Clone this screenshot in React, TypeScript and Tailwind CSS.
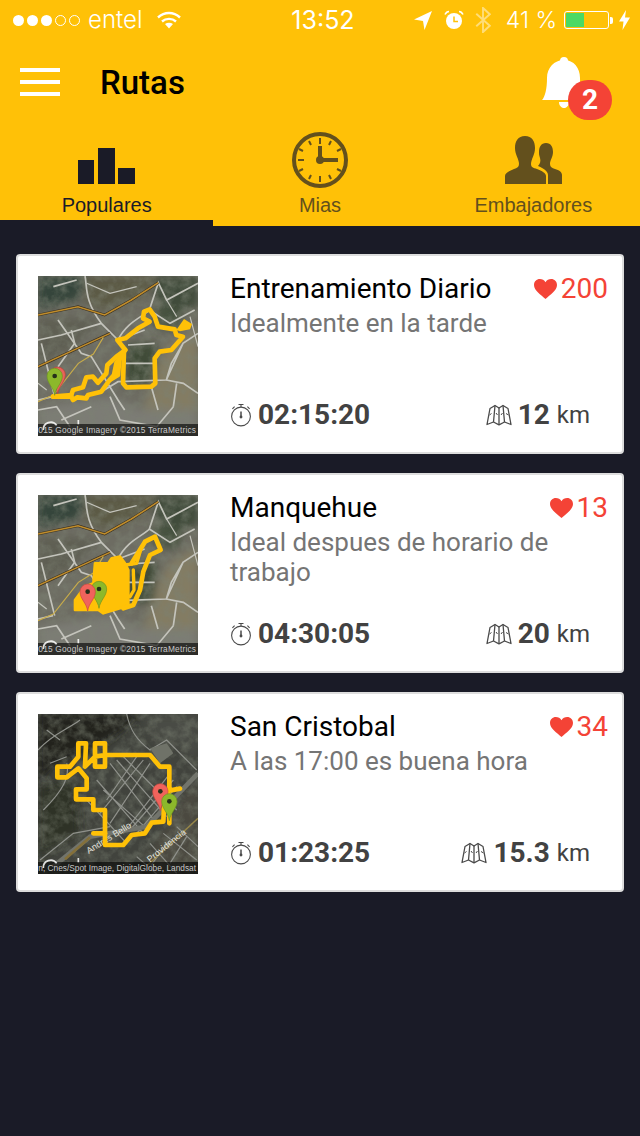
import type { ReactNode } from 'react';

const Pin = ({ x, y, color, edge }: { x: number; y: number; color: string; edge: string }) => (
  <g>
    <path
      d={`M${x} ${y}C${x - 3} ${y - 24} ${x - 23} ${y - 36} ${x - 23} ${y - 58}A23 23 0 1 1 ${x + 23} ${y - 58}C${x + 23} ${y - 36} ${x + 3} ${y - 24} ${x} ${y}Z`}
      fill={color}
      stroke={edge}
      strokeWidth="2"
    />
    <circle cx={x} cy={y - 58} r="7" fill="#26301a" />
  </g>
);

const RouteLine = ({ points, width = 14 }: { points: string; width?: number }) => (
  <polyline points={points} fill="none" stroke="#ffc107" strokeWidth={width} strokeLinejoin="round" strokeLinecap="round" />
);

const AndesTerrain = () => (
  <>
    <rect x="84" y="78" width="480" height="480" fill="#6d6c62" />
    <g filter="url(#soft-lg)">
      <polygon points="84,78 230,78 205,150 84,180" fill="#36443a" />
      <polygon points="230,78 440,78 400,140 290,180 230,165" fill="#5c5a45" />
      <polygon points="440,78 564,78 564,170 470,185 430,130" fill="#3f4c3a" />
      <polygon points="480,280 564,230 564,480 400,480 440,350" fill="#837b63" />
      <polygon points="350,285 440,280 430,400 345,400" fill="#414b38" />
      <polygon points="430,170 520,180 500,240 430,230" fill="#47533f" />
      <polygon points="84,470 300,440 400,480 564,480 564,558 84,558" fill="#7c7b75" />
      <polygon points="84,200 270,210 180,300 84,340" fill="#5f5f53" />
    </g>
    <rect x="84" y="78" width="480" height="480" filter="url(#grain)" opacity="0.55" />
    <g fill="none" stroke="#c4c4bc" strokeWidth="5" filter="url(#soft-sm)">
      <path d="M225 78C232 110 222 150 274 220L324 270M84 270L154 255L274 220M144 210L214 310L244 320L324 450L344 480" />
      <path d="M324 270C350 215 400 200 418 180L445 98L470 150L564 100M418 180L480 220L554 180M130 110L200 90M94 280L114 360L134 440M184 240L194 280L144 350" />
      <path d="M274 425L324 395L469 390L519 280L564 250M519 280L484 340L469 390M346 340L434 340M434 280L354 285M324 270L404 240M424 410L444 480" />
      <path d="M84 450L129 440M244 470L154 510M84 480L140 470L180 530M300 440L330 510L440 530L490 470M469 390L520 400L564 430M490 470L500 400" />
      <path d="M230 100L300 130L380 110M470 150L500 200M540 200L564 290M84 400L110 420" strokeWidth="3.5" />
    </g>
    <path d="M84 195L204 170L284 195L364 150L445 98" fill="none" stroke="#3a3020" strokeWidth="8" />
    <path d="M84 195L204 170L284 195L364 150L445 98" fill="none" stroke="#c08d2c" strokeWidth="4.5" />
    <path d="M84 350L300 250" fill="none" stroke="#3a3020" strokeWidth="8" />
    <path d="M84 350L300 250" fill="none" stroke="#c08d2c" strokeWidth="4.5" />
    <path d="M84 455L130 435L205 340L250 312L280 262" fill="none" stroke="#c8ac4a" strokeWidth="3.5" />
  </>
);

const UrbanTerrain = () => (
  <>
    <rect x="84" y="42" width="480" height="480" fill="#41433d" />
    <g filter="url(#soft-lg)">
      <polygon points="84,42 400,42 300,120 130,200 84,260" fill="#20241b" />
      <polygon points="84,260 200,230 210,400 84,470" fill="#2d3128" />
      <polygon points="400,42 564,42 564,170 430,120" fill="#4a4c45" />
      <polygon points="540,260 564,250 564,522 380,522" fill="#4c4a40" />
    </g>
    <rect x="84" y="42" width="480" height="480" filter="url(#grain)" opacity="0.5" />
    <g fill="none" stroke="#8f918b" strokeWidth="3.5" filter="url(#soft-sm)">
      <path d="M300 190L440 370M340 170L500 330M260 240L400 400M230 300L350 430M300 370L420 190M340 400L480 220M290 300L380 170M380 400L500 260M320 180L470 350M280 270L410 385M270 340L400 180M360 390L490 240" />
      <path d="M350 42C360 90 380 120 420 150L470 120L560 210M84 150C130 100 170 90 210 60M100 330C160 270 180 230 170 190M90 480L190 400L300 380M110 90L150 120M120 190L170 170" />
      <path d="M420 430L500 520M460 400L560 480M380 470L440 522M500 380L564 440M480 420L420 500M530 410L480 490" />
    </g>
    <path d="M130 500L240 410L410 380L564 220" fill="none" stroke="#72746c" strokeWidth="14" />
    <path d="M165 478L240 412" fill="none" stroke="#84703a" strokeWidth="8" />
    <path d="M410 498L564 355" fill="none" stroke="#978649" strokeWidth="4.5" />
    <path d="M420 145L470 130L490 160L450 190Z" fill="#6f7268" />
    <text x="236" y="462" transform="rotate(-32 236 462)" fontSize="27" fill="#e4e4df">Andres Bello</text>
    <text x="420" y="488" transform="rotate(-39 420 488)" fontSize="27" fill="#e4e4df">Providencia</text>
  </>
);

const RouteMap = ({ y, credit, children }: { y: number; credit: string; children: ReactNode }) => (
  <svg viewBox={`84 ${y} 480 480`} className="h-40 w-40 shrink-0 font-['Liberation_Sans']">
    <defs>
      <filter id="soft-lg" x="-20%" y="-20%" width="140%" height="140%">
        <feGaussianBlur stdDeviation="12" />
      </filter>
      <filter id="soft-sm">
        <feGaussianBlur stdDeviation="1.2" />
      </filter>
      <filter id="grain" x="0" y="0" width="100%" height="100%">
        <feTurbulence type="fractalNoise" baseFrequency="0.035" numOctaves="4" seed="7" />
        <feColorMatrix values="0 0 0 0 0.2 0 0 0 0 0.22 0 0 0 0 0.17 2.2 0 0 0 -0.8" />
      </filter>
    </defs>
    {children}
    <rect x="84" y={y + 444} width="480" height="36" fill="#000" opacity="0.62" />
    <path d={`M100 ${y + 462}A22 22 0 0 1 140 ${y + 448}M205 ${y + 432}V${y + 445}`} fill="none" stroke="#fff" strokeWidth="5" opacity="0.85" />
    <text x="85" y={y + 471} fontSize="25" fill="#c9c9c9" textLength="473">
      {credit}
    </text>
  </svg>
);

const StopwatchIcon = () => (
  <svg viewBox="0 0 22 24" className="h-6 w-[22px] shrink-0" fill="none" stroke="#4a4a4a" strokeWidth="1.1">
    <circle cx="11" cy="13.5" r="9.4" />
    <path d="M11 8.5V14" strokeWidth="1.5" />
    <circle cx="11" cy="14" r="0.9" fill="#4a4a4a" />
    <path d="M8.5 1.5H13.5M11 1.5V4M2.4 5.8L4.6 3.6M19.6 5.8L17.4 3.6" />
  </svg>
);

const FoldedMapIcon = () => (
  <svg viewBox="0 0 26 22" className="h-[22px] w-[26px] shrink-0" fill="none" stroke="#4a4a4a" strokeWidth="1.3" strokeLinejoin="round">
    <path d="M1 20.5L4 4.5L9 1.5L13 4L17 1.5L22 4.5L25 20.5L18.5 18L13 20.8L7.5 18Z" />
    <path d="M9 1.5L7.5 18M13 4V20.8M17 1.5L18.5 18" />
    <path d="M3.5 11L5.5 9.5M10 9L11.5 11M15 11L16.5 9M20 9.5L22.5 11" strokeWidth="1" />
  </svg>
);

const Heart = () => (
  <svg viewBox="0 0 23 20" className="h-5 w-[23px] shrink-0" fill="#f44336">
    <path d="M11.5 20C7 15.8 0 11.5 0 6C0 2.5 2.6 0 5.8 0C8.2 0 10.3 1.2 11.5 3.2C12.7 1.2 14.8 0 17.2 0C20.4 0 23 2.5 23 6C23 11.5 16 15.8 11.5 20Z" />
  </svg>
);

const RouteCard = ({
  title,
  note,
  likes,
  time,
  distance,
  map,
}: {
  title: string;
  note: string;
  likes: number;
  time: string;
  distance: string;
  map: ReactNode;
}) => (
  <article className="flex h-[200px] gap-8 rounded-[4px] border-2 border-[#dddddd] bg-white p-5">
    {map}
    <div className="flex min-w-0 flex-1 flex-col">
      <div className="flex items-start justify-between">
        <h2 className="-mt-[2px] text-[28px] leading-[30px] text-black">{title}</h2>
        <div className="-mr-[6px] -mt-[2px] flex items-center gap-1 text-[28px] leading-[30px] text-[#f44336]">
          <Heart />
          <span>{likes}</span>
        </div>
      </div>
      <p className="mt-[4px] text-[26px] leading-[30px] text-[#757575]">{note}</p>
      <div className="mt-auto mb-[1px] flex items-center justify-between pr-[12px] text-[#424242]">
        <div className="flex items-center gap-[6px]">
          <StopwatchIcon />
          <span className="text-[28px] font-bold leading-8">{time}</span>
        </div>
        <div className="flex items-center gap-[6px]">
          <FoldedMapIcon />
          <span className="text-[28px] font-bold leading-8">{distance}</span>
          <span className="ml-px text-[24px] leading-8">km</span>
        </div>
      </div>
    </div>
  </article>
);

const StatusBar = () => (
  <div className="grid h-10 grid-cols-[1fr_auto_1fr] items-center font-['Inter'] text-white">
    <div className="flex items-center pl-[13px]">
      <div className="flex gap-[3px]">
        <span className="h-[11px] w-[11px] rounded-full bg-white" />
        <span className="h-[11px] w-[11px] rounded-full bg-white" />
        <span className="h-[11px] w-[11px] rounded-full bg-white" />
        <span className="h-[11px] w-[11px] rounded-full border border-white" />
        <span className="h-[11px] w-[11px] rounded-full border border-white" />
      </div>
      <span className="ml-[8px] text-[24px] font-light leading-none">entel</span>
      <svg viewBox="0 0 24 18" className="ml-[14px] h-[18px] w-6" fill="none" stroke="#fff" strokeWidth="2.4">
        <path d="M1 6.5C7.5 0.5 16.5 0.5 23 6.5M5 10.5C9 7 15 7 19 10.5" />
        <path d="M8 13C10.5 11.4 13.5 11.4 16 13L12 17.5Z" fill="#fff" stroke="none" />
      </svg>
    </div>
    <span className="pl-[6px] text-[25px] leading-none">13:52</span>
    <div className="flex items-center justify-end pr-[10px]">
      <svg viewBox="0 0 18 19" className="h-[19px] w-[18px]" fill="#fff">
        <path d="M0 8.5L18 0L10.5 19L9 10Z" />
      </svg>
      <svg viewBox="0 0 20 20" className="ml-3 h-5 w-5" fill="none" stroke="#fff">
        <circle cx="10" cy="11" r="8" fill="#fff" stroke="none" />
        <path d="M10 6.5V11.5H14" stroke="#ffc107" strokeWidth="1.5" />
        <path d="M1 4.5C2 2.5 3.5 1.5 5 1.5M19 4.5C18 2.5 16.5 1.5 15 1.5" strokeWidth="1.6" />
      </svg>
      <svg viewBox="0 0 16 27" className="ml-[11px] h-[26px] w-4" fill="none" stroke="#fff" strokeWidth="2" opacity="0.45">
        <path d="M1 7L15 19.5L8 26V1L15 7.5L1 20" />
      </svg>
      <span className="ml-[15px] text-[23px] font-light leading-none">41 %</span>
      <div className="ml-[7px] h-[18px] w-[45px] rounded-[3px] border border-white p-[1px]">
        <div className="h-full w-[18px] bg-[#4cd964]" />
      </div>
      <span className="ml-[1px] h-[7px] w-[3px] rounded-r-[2px] bg-white" />
      <svg viewBox="0 0 11 20" className="ml-[6px] h-5 w-[11px]" fill="#fff">
        <path d="M7 0L0 11.5H4.5L3.5 20L11 7.5H6Z" />
      </svg>
    </div>
  </div>
);

const Header = () => (
  <div className="flex h-[84px] items-center px-5">
    <div className="flex h-7 w-10 flex-col justify-between">
      <span className="h-1 bg-white" />
      <span className="h-1 bg-white" />
      <span className="h-1 bg-white" />
    </div>
    <h1 className="ml-10 text-[33px] font-medium leading-none text-black">Rutas</h1>
    <div className="relative ml-auto mr-9 h-[52px] w-[42px]">
      <svg viewBox="0 0 42 52" className="h-full w-full" fill="#fff">
        <circle cx="22" cy="5" r="4" />
        <path d="M22 4C32 4 38 12 38 22C38 31 39 37 42 44H0C3 41 5 33 5 22C5 12 12 4 22 4Z" />
        <path d="M17 46H27C27 50 24 52 22 52C20 52 17 50 17 46Z" />
      </svg>
      <span className="absolute left-[26px] top-[24px] flex h-10 w-11 items-center justify-center rounded-full bg-[#f44336] text-[28px] font-bold leading-none text-white">
        2
      </span>
    </div>
  </div>
);

const Tabs = () => (
  <div className="grid h-[102px] grid-cols-3 font-['Liberation_Sans'] text-[20px]">
    <div className="flex flex-col items-center border-b-[6px] border-[#1a1b27] pt-6 text-[#1a1b27]">
      <svg viewBox="0 0 57 36" className="h-9 w-[57px]" fill="#1a1b27">
        <rect y="12" width="16" height="24" />
        <rect x="20" width="17" height="36" />
        <rect x="40" y="20" width="17" height="16" />
      </svg>
      <span className="mt-[9px] leading-[24px]">Populares</span>
    </div>
    <div className="flex flex-col items-center pt-2 text-[#63501d]">
      <svg viewBox="0 0 56 56" className="h-14 w-14" fill="none" stroke="#63501d">
        <circle cx="28" cy="28" r="26" strokeWidth="4" />
        <path d="M28 6V12M28 44V50M6 28H12M39 9L37 13M49 17L45 19M49 39L45 37M39 47L37 43M17 47L19 43M7 39L11 37M7 17L11 19M17 9L19 13" strokeWidth="2" />
        <path d="M28 14V28H46" strokeWidth="4" />
        <circle cx="28" cy="28" r="4" fill="#63501d" stroke="none" />
      </svg>
      <span className="mt-[5px] leading-[24px]">Mias</span>
    </div>
    <div className="flex flex-col items-center pt-3 text-[#63501d]">
      <svg viewBox="0 0 57 48" className="h-12 w-[57px]" fill="#63501d">
        <path d="M20 0C27 0 30 5 30 12C30 19 26 23 26 28C26 31 28 32 32 33C37 35 41 37 41 40V48H0V40C0 37 4 35 9 33C12 32 14 31 14 28C14 23 10 19 10 12C10 5 13 0 20 0Z" />
        <path d="M41 7C46 7 48 11 48 16C48 21 45 24 45 28C45 31 47 32 50 33C54 34 57 36 57 39V48H43V39C43 35 38 32 33 30C35 28 36 25 35 22C34 19 34 18 34 16C34 11 36 7 41 7Z" />
      </svg>
      <span className="mt-[9px] leading-[24px]">Embajadores</span>
    </div>
  </div>
);

export default function App() {
  return (
    <div className="min-h-[1136px] bg-[#1a1b27] font-['Roboto']">
      <header className="bg-[#ffc107]">
        <StatusBar />
        <Header />
        <Tabs />
      </header>
      <main className="flex flex-col gap-[19px] px-4 pt-7">
        <RouteCard
          title="Entrenamiento Diario"
          note="Idealmente en la tarde"
          likes={200}
          time="02:15:20"
          distance="12"
          map={
            <RouteMap y={78} credit="015 Google  Imagery ©2015 TerraMetrics">
              <AndesTerrain />
              <Pin x={143} y={432} color="#e8635a" edge="#b8423a" />
              <RouteLine points="129,440 184,440 189,450 202,442 229,445 234,435 274,425 299,390 312,375 319,340 346,300 322,270 346,265 384,235 419,215 399,205 402,185 419,178 434,200 444,230 494,238 499,255 519,260 484,300 449,305 434,325 436,400 424,410 349,412 339,400 342,300" />
              <RouteLine points="346,300 319,320 292,345 289,370 264,398 249,380 229,382 219,412 189,420 184,435 129,440" />
              <RouteLine points="329,315 324,375 299,390" />
              <polygon points="499,240 522,207 546,222 540,238 510,244" fill="#ffc107" />
              <Pin x={134} y={436} color="#8cb82b" edge="#6e9420" />
            </RouteMap>
          }
        />
        <RouteCard
          title="Manquehue"
          note="Ideal despues de horario de trabajo"
          likes={13}
          time="04:30:05"
          distance="20"
          map={
            <RouteMap y={78} credit="015 Google  Imagery ©2015 TerraMetrics">
              <AndesTerrain />
              <g transform="translate(0 48)">
                <polygon points="195,375 195,345 225,305 250,295 255,235 295,235 305,220 330,215 345,235 355,255 355,360 330,370 280,385 265,375" fill="#ffc107" stroke="#ffc107" strokeWidth="8" strokeLinejoin="round" />
                <RouteLine points="365,235 405,170 435,155 452,195 420,210 400,260 390,315 370,360 340,370" />
                <RouteLine points="345,240 380,235 395,185" width={10} />
                <RouteLine points="370,255 372,315 360,335" width={10} />
                <Pin x={267} y={370} color="#8cb82b" edge="#6e9420" />
                <Pin x={233} y={378} color="#f0635c" edge="#c94840" />
              </g>
            </RouteMap>
          }
        />
        <RouteCard
          title="San Cristobal"
          note="A las 17:00 es buena hora"
          likes={34}
          time="01:23:25"
          distance="15.3"
          map={
            <RouteMap y={42} credit="n, Cnes/Spot Image, DigitalGlobe, Landsat">
              <UrbanTerrain />
              <RouteLine points="285,435 340,435 365,405 405,400 425,368 460,365 462,320 478,272 510,266 478,272 478,200 450,200 420,165 285,165 285,130 255,130 255,200 285,200 285,165 255,170 225,200 228,130 205,130 205,170 180,200 142,200 142,232 170,232 205,205 230,235 230,268 198,268 198,298 250,298 250,330 285,330 285,435" />
              <RouteLine points="250,400 285,400" />
              <RouteLine points="478,320 478,370" />
              <Pin x={451} y={332} color="#f0635c" edge="#c94840" />
              <Pin x={478} y={362} color="#8cb82b" edge="#6e9420" />
            </RouteMap>
          }
        />
      </main>
    </div>
  );
}
